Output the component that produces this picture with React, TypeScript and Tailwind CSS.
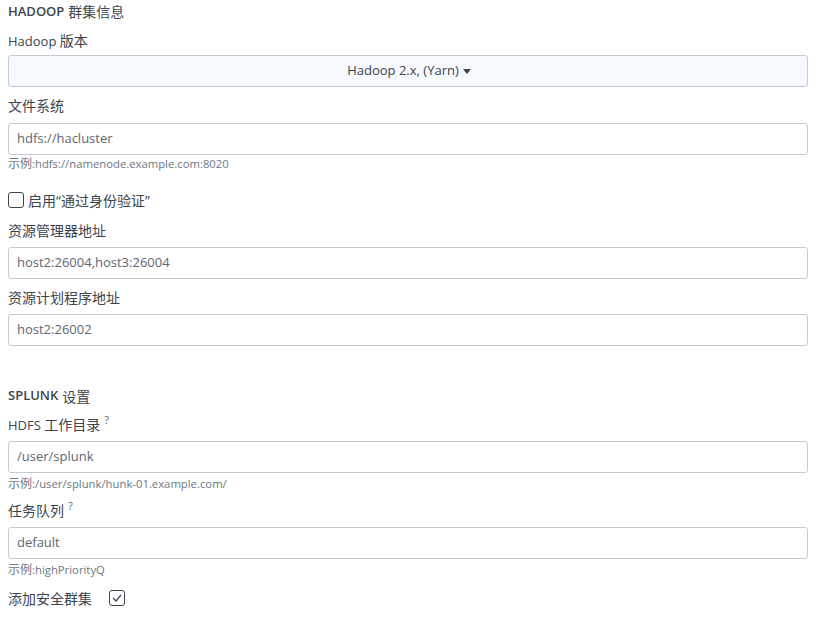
import React from 'react';

const font = { fontFamily: '"Open Sans", "Noto Sans CJK SC", sans-serif' };

function Zh({ children, size = 'text-[14px]' }: { children: React.ReactNode; size?: string }) {
  return <span className={size}>{children}</span>;
}

function Label({ children, help }: { children: React.ReactNode; help?: boolean }) {
  return (
    <div className="h-5 flex items-center text-[13px] leading-5 text-[#3c444d]">
      <span>{children}</span>
      {help && <span className="ml-[4px] -mt-[10px] text-[11px] text-[#5a6878]">?</span>}
    </div>
  );
}

function TextInput({ value }: { value: string }) {
  return (
    <div className="h-8 w-[800px] rounded-[3px] border border-[#c3cbd4] bg-white px-[8px] flex items-center text-[13px] text-[#5c6773]">
      {value}
    </div>
  );
}

function Help({ children }: { children: React.ReactNode }) {
  return (
    <div className="h-[14px] flex items-center text-[11.3px] leading-[14px] text-[#6b7785]">
      <Zh size="text-[12px]">示例</Zh>
      {children}
    </div>
  );
}

export default function App() {
  return (
    <div className="w-[816px] h-[617px] bg-white px-2 overflow-hidden" style={font}>
      <div className="pt-[1px] h-5 flex items-center text-[13px] font-semibold text-[#3c444d] mt-[1px]">
        HADOOP <Zh size="text-[14px] font-normal ml-[4px]">群集信息</Zh>
      </div>
      <div className="mt-[10px]">
        <Label>Hadoop <Zh>版本</Zh></Label>
      </div>
      <div className="mt-[4px] h-8 w-[800px] rounded-[3px] border border-[#c3cbd4] bg-[#f6f9fd] flex items-center justify-center text-[13px] text-[#3c444d]">
        <span className="ml-[2px]">Hadoop 2.x, (Yarn)</span>
        <svg width="8" height="5" viewBox="0 0 8 5" className="ml-[4px]">
          <path d="M0 0 L8 0 L4 5 Z" fill="#3c444d" />
        </svg>
      </div>

      <div className="mt-[9px]">
        <Label><Zh>文件系统</Zh></Label>
      </div>
      <div className="mt-[7px]">
        <TextInput value="hdfs://hacluster" />
      </div>
      <div className="mt-[2px]">
        <Help>:hdfs://namenode.example.com:8020</Help>
      </div>

      <div className="mt-[19px] h-5 flex items-center text-[13px] text-[#3c444d]">
        <span className="w-4 h-4 rounded-[3px] border-[1.5px] border-[#3c444d] mr-[4px] bg-white" />
        <Zh>启用“通过身份验证”</Zh>
      </div>

      <div className="mt-[11px]">
        <Label><Zh>资源管理器地址</Zh></Label>
      </div>
      <div className="mt-[6px]">
        <TextInput value="host2:26004,host3:26004" />
      </div>

      <div className="mt-[9px]">
        <Label><Zh>资源计划程序地址</Zh></Label>
      </div>
      <div className="mt-[6px]">
        <TextInput value="host2:26002" />
      </div>

      <div className="mt-[40px] h-5 flex items-center text-[13px] font-semibold text-[#3c444d]">
        SPLUNK <Zh size="text-[14px] font-normal ml-[4px]">设置</Zh>
      </div>
      <div className="mt-[9px]">
        <Label help>HDFS <Zh>工作目录</Zh></Label>
      </div>
      <div className="mt-[6px]">
        <TextInput value="/user/splunk" />
      </div>
      <div className="mt-[4px]">
        <Help>:/user/splunk/hunk-01.example.com/</Help>
      </div>

      <div className="mt-[10px]">
        <Label help><Zh>任务队列</Zh></Label>
      </div>
      <div className="mt-[6px]">
        <TextInput value="default" />
      </div>
      <div className="mt-[4px]">
        <Help>:highPriorityQ</Help>
      </div>

      <div className="mt-[11px] h-5 flex items-center text-[13px] text-[#3c444d]">
        <Zh>添加安全群集</Zh>
        <span className="ml-[17px] w-4 h-4 rounded-[3px] border border-[#3c444d] flex items-center justify-center bg-white">
          <svg width="10" height="8" viewBox="0 0 10 8">
            <path d="M1 4 L4 7 L9 1" fill="none" stroke="#3c444d" strokeWidth="1.2" />
          </svg>
        </span>
      </div>
    </div>
  );
}
